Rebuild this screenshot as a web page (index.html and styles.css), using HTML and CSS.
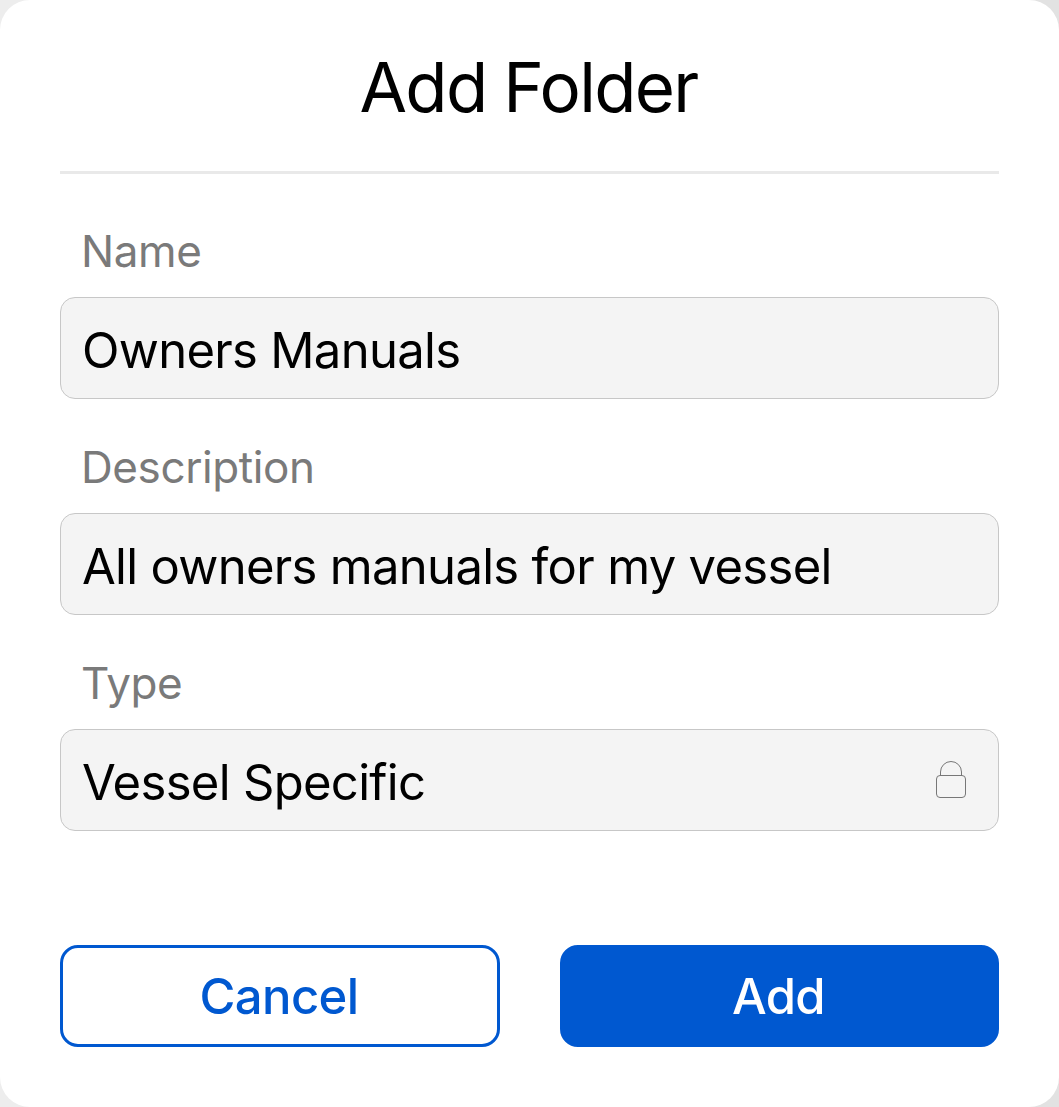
FILE: index.html
```html
<!DOCTYPE html>
<html lang="en">
<head>
  <meta charset="UTF-8" />
  <meta name="viewport" content="width=device-width, initial-scale=1.0"/>
  <title>Add Folder</title>
  <link rel="stylesheet" href="styles.css">
</head>
<body>
  <div class="modal">
    <h1>Add Folder</h1>

    <form class="folder-form">
      <div class="form-group">
        <label for="name">Name</label>
        <div class="field">
          <input type="text" id="name" name="name" value="Owners Manuals" />
        </div>
      </div>

      <div class="form-group">
        <label for="description">Description</label>
        <div class="field">
          <input type="text" id="description" name="description" value="All owners manuals for my vessel" />
        </div>
      </div>

      <div class="form-group">
        <label for="type">Type</label>
        <div class="field">
          <input type="text" id="type" name="type" value="Vessel Specific" readonly />
          <svg class="lock" width="32" height="40" viewBox="0 0 32 40" fill="none" stroke="#777">
            <rect x="1.5" y="15.5" width="29" height="22" rx="3.5"/>
            <path d="M5.5 15.5V12a10.5 10.5 0 0 1 21 0v3.5"/>
          </svg>
        </div>
      </div>

      <div class="actions">
        <button type="button" class="cancel">Cancel</button>
        <button type="button" class="add">Add</button>
      </div>
    </form>
  </div>
</body>
</html>
```
FILE: styles.css
```css
* {
  box-sizing: border-box;
}

body {
  margin: 0;
  background: linear-gradient(to right, #ededed 50%, #e2e2e2 50%);
  font-family: Inter, "Liberation Sans", sans-serif;
}

.modal {
  height: 1107px;
  padding: 0 60px;
  background: #fff;
  border-radius: 30px;
}

h1 {
  height: 174px;
  margin: 0;
  padding: 42px 2px 0 0;
  border-bottom: 3px solid #e9e9e9;
  font-size: 69px;
  line-height: 90px;
  font-weight: 400;
  letter-spacing: -1.7px;
  word-spacing: -1px;
  text-align: center;
}

.folder-form {
  padding-top: 27px;
}

.form-group {
  height: 216px;
}

label {
  display: block;
  height: 96px;
  padding: 20px 21px 0;
  color: #7a7a7a;
  font-size: 44px;
  line-height: 60px;
  letter-spacing: -0.4px;
}

.field {
  display: flex;
  align-items: center;
  height: 102px;
  padding: 0 31px 0 21px;
  background: #f4f4f4;
  border: 1px solid #c7c7c7;
  border-radius: 15px;
}

.field input {
  flex: 1;
  min-width: 0;
  height: 100px;
  padding: 5px 0 0;
  border: none;
  outline: none;
  background: transparent;
  color: #000;
  font-family: inherit;
  font-size: 49px;
  letter-spacing: -0.7px;
}

.actions {
  display: grid;
  grid-template-columns: 440px 439px;
  gap: 60px;
  padding-top: 96px;
}

button {
  height: 102px;
  padding: 0 2px 0 0;
  border: 3px solid #0058d0;
  border-radius: 18px;
  font-family: inherit;
  font-size: 49px;
  font-weight: 500;
  letter-spacing: -0.6px;
}

.cancel {
  background: #fff;
  color: #0058d0;
}

.add {
  background: #0058d0;
  color: #fff;
}
```
